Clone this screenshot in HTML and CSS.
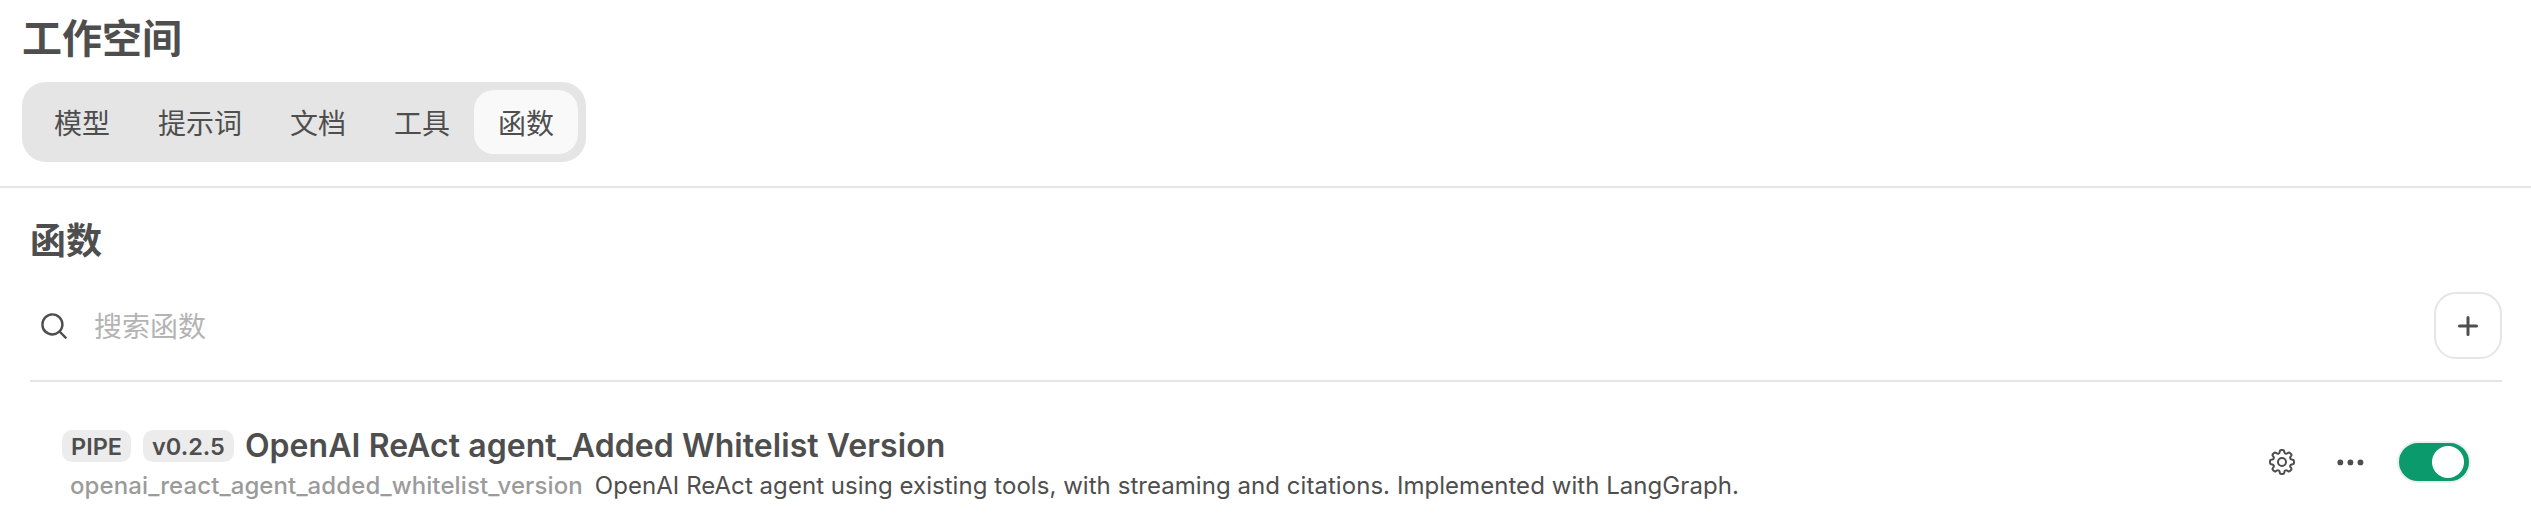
FILE: index.html

```html
<!DOCTYPE html>
<html lang="zh-CN">
<head>
  <meta charset="UTF-8" />
  <title>函数 - 工作空间</title>
  <link rel="stylesheet" href="styles.css">
</head>
<body>
  <header class="top">
    <h1>工作空间</h1>
    <nav class="tabs">
      <a href="#">模型</a>
      <a href="#">提示词</a>
      <a href="#">文档</a>
      <a href="#">工具</a>
      <a href="#" class="active">函数</a>
    </nav>
  </header>
  <main class="content">
    <h2>函数</h2>
    <div class="search">
      <svg class="icon-search" viewBox="0 0 20 20" fill="currentColor"><path fill-rule="evenodd" clip-rule="evenodd" d="M9 3.5a5.5 5.5 0 1 0 0 11 5.5 5.5 0 0 0 0-11ZM2 9a7 7 0 1 1 12.452 4.391l3.328 3.329a.75.75 0 1 1-1.06 1.06l-3.329-3.328A7 7 0 0 1 2 9Z"/></svg>
      <input placeholder="搜索函数">
      <button class="add">
        <svg viewBox="0 0 16 16" fill="currentColor"><path d="M8.75 3.75a.75.75 0 0 0-1.5 0v3.5h-3.5a.75.75 0 0 0 0 1.5h3.5v3.5a.75.75 0 0 0 1.5 0v-3.5h3.5a.75.75 0 0 0 0-1.5h-3.5v-3.5Z"/></svg>
      </button>
    </div>
    <hr>
    <div class="row">
      <div class="info">
        <div class="line-title">
          <span class="badge">PIPE</span>
          <span class="badge">v0.2.5</span>
          <span class="name">OpenAI ReAct agent_Added Whitelist Version</span>
        </div>
        <div class="line-desc">
          <span class="slug">openai_react_agent_added_whitelist_version</span>
          <span class="desc">OpenAI ReAct agent using existing tools, with streaming and citations. Implemented with LangGraph.</span>
        </div>
      </div>
      <div class="actions">
        <button class="icon-btn">
          <svg class="icon-gear" viewBox="0 0 24 24" fill="none" stroke="currentColor" stroke-width="1.5"><path stroke-linecap="round" stroke-linejoin="round" d="M10.343 3.94c.09-.542.56-.94 1.11-.94h1.093c.55 0 1.02.398 1.11.94l.149.894c.07.424.384.764.78.93.398.164.855.142 1.205-.108l.737-.527a1.125 1.125 0 0 1 1.45.12l.773.774c.39.389.44 1.002.12 1.45l-.527.737c-.25.35-.272.806-.107 1.204.165.397.505.71.93.78l.893.15c.543.09.94.559.94 1.109v1.094c0 .55-.397 1.02-.94 1.11l-.894.149c-.424.07-.764.383-.929.78-.165.398-.143.854.107 1.204l.527.738c.32.447.269 1.06-.12 1.45l-.774.773a1.125 1.125 0 0 1-1.449.12l-.738-.527c-.35-.25-.806-.272-1.203-.107-.398.165-.71.505-.781.929l-.149.894c-.09.542-.56.94-1.11.94h-1.094c-.55 0-1.019-.398-1.11-.94l-.148-.894c-.071-.424-.384-.764-.781-.93-.398-.164-.854-.142-1.204.108l-.738.527c-.447.32-1.06.269-1.45-.12l-.773-.774a1.125 1.125 0 0 1-.12-1.45l.527-.737c.25-.35.272-.806.108-1.204-.165-.397-.506-.71-.93-.78l-.894-.15c-.542-.09-.94-.56-.94-1.109v-1.094c0-.55.398-1.02.94-1.11l.894-.149c.424-.07.765-.383.93-.78.165-.398.143-.854-.108-1.204l-.526-.738a1.125 1.125 0 0 1 .12-1.45l.773-.773a1.125 1.125 0 0 1 1.45-.12l.737.527c.35.25.807.272 1.204.107.397-.165.71-.505.78-.929l.15-.894Z"/><path stroke-linecap="round" stroke-linejoin="round" d="M15 12a3 3 0 1 1-6 0 3 3 0 0 1 6 0Z"/></svg>
        </button>
        <button class="icon-btn">
          <svg class="icon-dots" viewBox="0 0 20 20" fill="currentColor"><circle cx="3" cy="10" r="2"/><circle cx="10" cy="10" r="2"/><circle cx="17" cy="10" r="2"/></svg>
        </button>
        <span class="toggle"><span class="knob"></span></span>
      </div>
    </div>
  </main>
</body>
</html>
```

FILE: styles.css

```css
*{box-sizing:border-box;}
body{margin:0;background:#fff;color:#4e4e4e;font-family:Inter,"Noto Sans CJK SC",sans-serif;}
button{border:none;background:none;color:inherit;padding:0;cursor:pointer;display:flex;align-items:center;justify-content:center;}
svg{display:block;}

/* Header */
.top{height:188px;padding:11px 22px 0;border-bottom:2px solid #e5e5e5;}
h1{margin:0;font-size:40px;line-height:56px;font-weight:700;}
.tabs{display:inline-flex;margin-top:15px;height:80px;padding:8px;background:#e5e5e5;border-radius:24px;}
.tabs a{display:flex;align-items:center;padding:0 24px;font-size:28px;color:#4e4e4e;text-decoration:none;border-radius:20px;}
.tabs a.active{background:#f9f9f9;}

/* Content */
.content{padding:0 29px 0 30px;}
h2{margin:0;padding-top:29px;font-size:36px;line-height:48px;font-weight:700;}
.search{display:flex;align-items:center;height:67px;margin-top:27px;}
.icon-search{width:32px;height:32px;margin-left:8px;}
.search input{flex:1;border:none;outline:none;background:none;margin-left:24px;padding:2px 0 0;font:28px Inter,"Noto Sans CJK SC",sans-serif;color:#4e4e4e;}
.search input::placeholder{color:#b4b4b4;}
.add{width:68px;height:67px;border:2px solid #e5e5e5;border-radius:22px;}
.add svg{width:32px;height:32px;}
hr{margin:21px 0 0;border:none;height:2px;background:#e5e5e5;}

.row{display:flex;align-items:flex-start;justify-content:space-between;margin-top:44px;}
.info{padding-left:32px;}
.line-title{display:flex;align-items:center;height:40px;}
.badge{height:32px;display:flex;align-items:center;padding:0 9px;margin-right:12px;background:#ececec;border-radius:10px;font-size:23.5px;font-weight:600;}
.name{margin-left:-1px;font-size:32px;line-height:40px;font-weight:600;letter-spacing:.07px;}
.line-desc{display:flex;gap:12px;padding-left:8px;font-size:24px;line-height:32px;margin-top:4px;}
.slug{color:#9b9b9b;font-weight:500;letter-spacing:.1px;}
.desc{letter-spacing:.05px;}
.actions{display:flex;align-items:center;margin-top:15px;margin-right:31px;}
.icon-btn{width:32px;height:32px;}
.icon-gear{width:32px;height:32px;}
.icon-dots{width:28.8px;height:28.8px;}
.actions .icon-btn + .icon-btn{margin-left:36px;}
.toggle{display:flex;align-items:center;justify-content:flex-end;width:74px;height:42px;margin-left:31px;padding-right:5px;background:#0a9a6b;border:2px solid #eeeeee;border-radius:21px;}
.knob{width:32px;height:32px;background:#fff;border-radius:50%;}
```
